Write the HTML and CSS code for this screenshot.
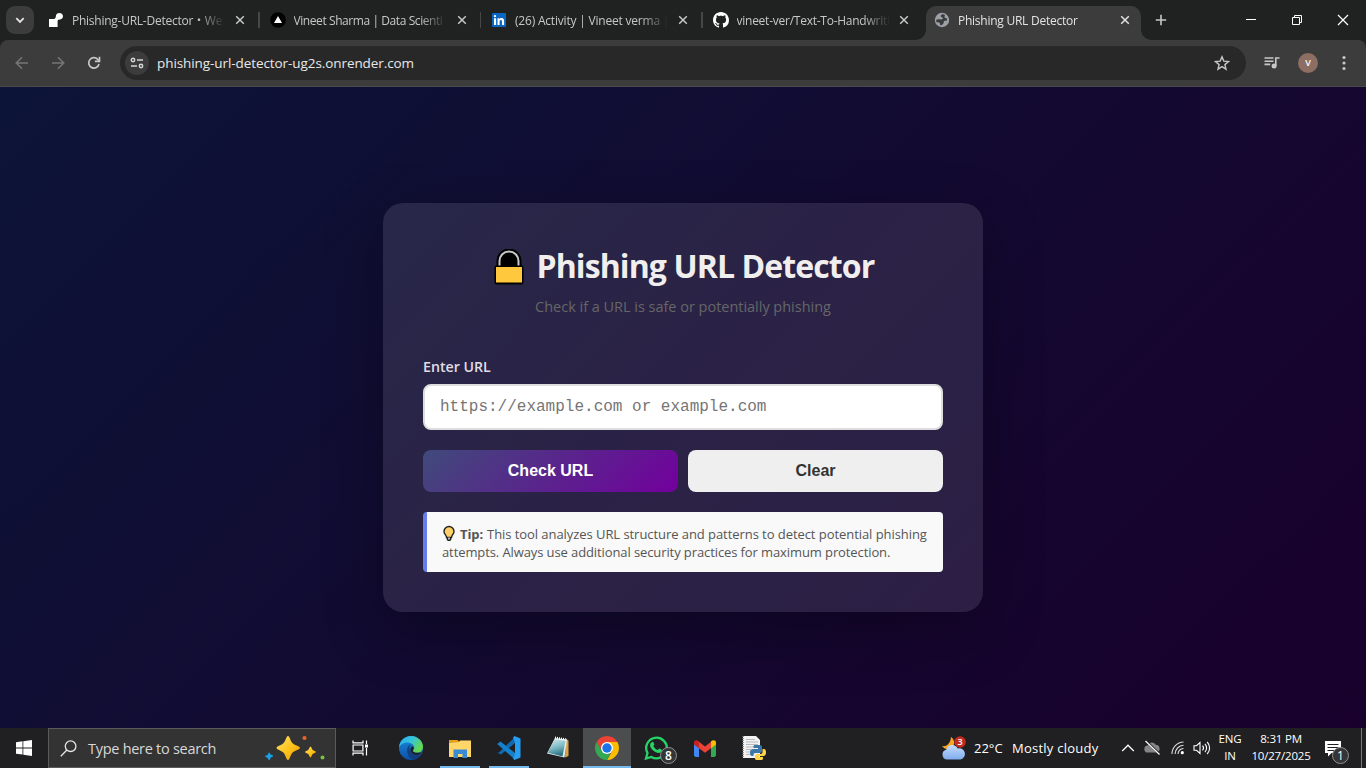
FILE: index.html
```html
<!DOCTYPE html>
<html lang="en">
<head>
<meta charset="utf-8">
<title>Phishing URL Detector</title>
<link rel="stylesheet" href="styles.css">
</head>
<body>
<div class="screen">
  <header class="tabstrip">
    <div class="tab-search"><svg width="10" height="10" viewBox="0 0 10 10" fill="none" stroke="#e3e3e3" stroke-width="1.8"><path d="M1.3 3.2 5 6.9l3.7-3.7"/></svg></div>
    <div class="tabs">
      <div class="tab sep">
        <svg class="fav" width="16" height="16" viewBox="0 0 16 16" fill="#fff"><path d="M1 7h4.500c1.800 0 2.200-1.300 2.400-3C8.100 2 9.300 1 11.500 1 13.600 1 15 2.500 15 4.200S13.600 7.500 11.600 7.500c-1.700 0-2 .8-2 2V15H1z"/></svg>
        <span class="title t1">Phishing-URL-Detector・We</span>
        <svg class="x" width="10" height="10" viewBox="0 0 10 10" stroke="#c7c7c7" stroke-width="1.5"><path d="m1.200 1.200 7.600 7.600M8.800 1.200 1.200 8.800"/></svg>
      </div>
      <div class="tab sep">
        <svg class="fav" width="16" height="16" viewBox="0 0 16 16"><circle cx="8" cy="8" r="7.800"/><path fill="#fff" d="m8 4 4 7H4z"/></svg>
        <span class="title t2">Vineet Sharma | Data Scienti</span>
        <svg class="x" width="10" height="10" viewBox="0 0 10 10" stroke="#c7c7c7" stroke-width="1.5"><path d="m1.200 1.200 7.600 7.600M8.800 1.200 1.200 8.800"/></svg>
      </div>
      <div class="tab sep">
        <svg class="fav" width="16" height="16" viewBox="0 0 16 16"><rect x="1" y="1" width="14" height="14" rx="1" fill="#0a66c2"/><path fill="#fff" d="M3 6.300h2.100V13H3zM6.500 6.300h2v1c.4-.7 1.100-1.200 2.100-1.200 2 0 2.500 1.300 2.500 3.200V13H11V9.700c0-1-.1-1.800-1.100-1.800S8.600 8.700 8.600 9.600V13H6.500z"/><circle cx="4" cy="4.100" r="1.200" fill="#fff"/></svg>
        <span class="title t3">(26) Activity | Vineet verma |</span>
        <svg class="x" width="10" height="10" viewBox="0 0 10 10" stroke="#c7c7c7" stroke-width="1.5"><path d="m1.200 1.200 7.600 7.600M8.800 1.200 1.200 8.800"/></svg>
      </div>
      <div class="tab">
        <svg class="fav" width="16" height="16" viewBox="0 0 16 16" fill="#fff"><path d="M8 0C3.580 0 0 3.580 0 8c0 3.540 2.290 6.530 5.470 7.590.4.070.55-.17.55-.38 0-.19-.01-.82-.01-1.490-2.010.37-2.530-.49-2.690-.94-.09-.23-.48-.94-.82-1.130-.28-.15-.68-.52-.01-.53.63-.01 1.080.58 1.230.82.72 1.210 1.870.87 2.330.66.07-.52.28-.87.51-1.070-1.780-.2-3.640-.89-3.640-3.950 0-.87.31-1.590.82-2.150-.08-.2-.36-1.020.08-2.120 0 0 .67-.21 2.200.82.64-.18 1.320-.27 2-.27s1.360.09 2 .27c1.530-1.040 2.200-.82 2.200-.82.44 1.100.16 1.920.08 2.120.51.56.82 1.270.82 2.150 0 3.070-1.870 3.750-3.650 3.950.29.25.54.73.54 1.480 0 1.070-.01 1.930-.01 2.200 0 .21.15.46.55.38A8.010 8.010 0 0 0 16 8c0-4.420-3.580-8-8-8"/></svg>
        <span class="title t4">vineet-ver/Text-To-Handwriti</span>
        <svg class="x" width="10" height="10" viewBox="0 0 10 10" stroke="#c7c7c7" stroke-width="1.5"><path d="m1.200 1.200 7.600 7.600M8.800 1.200 1.200 8.800"/></svg>
      </div>
      <div class="tab active">
        <svg class="fav" width="16" height="16" viewBox="0 0 16 16"><circle cx="8" cy="8" r="7.200" fill="#9aa0a6"/><path fill="#3c3c3c" d="M8.500 2.200C6.800 2.500 6.600 4 7 4.700c.5.800 1.500.4 1.800 1.200.3 1-.6 1.400-1.400 1.500-1 .1-2-.3-3-.2-1 0-1.800.2-2.300.8 0 .9.200 1.600.5 2.300.9.200 2-.1 2.800.4.900.6.300 1.600 1 2.300.6.500 1.600.4 2-.4.300-.8.900-1 1.300-1.700.3-.7-.200-1.300.4-1.900.8-.6 1.900-.1 2.700-.6.300-.6.300-1.300.1-2-.7-.5-2-.2-2.300-1.200-.3-1 .5-1.400.2-2.200-.400-.6-1.300-.9-2.300-.8"/></svg>
        <span class="title t5">Phishing URL Detector</span>
        <svg class="x" width="10" height="10" viewBox="0 0 10 10" stroke="#e3e3e3" stroke-width="1.500"><path d="m1.200 1.200 7.600 7.600M8.800 1.200 1.200 8.800"/></svg>
      </div>
    </div>
    <svg class="newtab" width="12" height="12" viewBox="0 0 12 12" stroke="#c7c7c7" stroke-width="1.600"><path d="M6 .8v10.400M.8 6h10.400"/></svg>
    <div class="win-controls">
      <svg width="46" height="40" viewBox="0 0 46 40" stroke="#fff"><path d="M18 19.500h10"/></svg>
      <svg width="46" height="40" viewBox="0 0 46 40" stroke="#fff" fill="none"><path d="M18.500 17.500h7v7h-7zM20.500 17v-1.500h7v7H26"/></svg>
      <svg width="46" height="40" viewBox="0 0 46 40" stroke="#fff" stroke-width="1.200"><path d="m18 15 10 10M28 15 18 25"/></svg>
    </div>
  </header>

  <nav class="toolbar">
    <svg class="nav-btn" width="36" height="36" viewBox="0 0 36 36" fill="none" stroke="#757575" stroke-width="1.600"><path d="M24 18H12.500m5.500-5.700L12.300 18l5.700 5.700"/></svg>
    <svg class="nav-btn" width="36" height="36" viewBox="0 0 36 36" fill="none" stroke="#757575" stroke-width="1.600"><path d="M12 18h11.500M18 12.300l5.700 5.700-5.700 5.700"/></svg>
    <svg class="nav-btn" width="36" height="36" viewBox="0 0 36 36" fill="none" stroke="#c7c7c7" stroke-width="1.700"><path d="M23 19a5.200 5.200 0 1 1-1.300-4.700L23.500 16"/><path d="M23.500 11.800v4.600h-4.600"/></svg>
    <div class="omnibox">
      <div class="chip"><svg width="16" height="16" viewBox="0 0 16 16" fill="none" stroke="#d5d5d5" stroke-width="1.500"><circle cx="4" cy="5" r="1.700"/><path d="M8 5h6M2 11h6"/><circle cx="12" cy="11" r="1.700"/></svg></div>
      <span class="address">phishing-url-detector-ug2s.onrender.com</span>
      <svg class="star" width="16" height="16" viewBox="0 0 16 16" fill="none" stroke="#c7c7c7" stroke-width="1.400"><path d="m8 1.800 1.800 4.300 4.700.4-3.600 3.100 1.100 4.600L8 11.700l-4 2.500 1.100-4.600-3.600-3.100 4.700-.4z"/></svg>
    </div>
    <svg class="media" width="16" height="14" viewBox="0 0 16 14" fill="none" stroke="#c7c7c7" stroke-width="1.600"><path d="M.5 2h9M.5 5.200h9M.5 8.400h5.700M11.800 10V2h3.700"/><circle cx="10.100" cy="10" r="1.700" fill="#c7c7c7"/></svg>
    <div class="avatar">V</div>
    <svg class="dots" width="4" height="16" viewBox="0 0 4 16" fill="#c7c7c7"><circle cx="2" cy="2.500" r="1.600"/><circle cx="2" cy="8" r="1.600"/><circle cx="2" cy="13.500" r="1.600"/></svg>
  </nav>

  <main class="page">
    <section class="card">
      <div class="heading">
        <svg class="lock" width="30" height="37" viewBox="0 0 30 37"><path d="M4.500 17v-5a10 10 0 0 1 21 0v5z" fill="#000" stroke="#000" stroke-width="4"/><path d="M5.500 18v-6a9.500 9.500 0 0 1 19 0v6" fill="#000" stroke="#c8c8c8" stroke-width="2"/><rect x=".5" y="16.500" width="29" height="19" rx="2" fill="#000"/><rect x="2" y="18" width="26" height="15.500" fill="#ffc83d"/></svg>
        <h1>Phishing URL Detector</h1>
      </div>
      <p class="subtitle"><span>Check if a URL is safe or potentially phishing</span></p>
      <label class="label">Enter URL</label>
      <input class="url" type="text" placeholder="https://example.com or example.com">
      <div class="buttons">
        <button class="btn check">Check URL</button>
        <button class="btn clear">Clear</button>
      </div>
      <div class="tip">
        <div class="line first"><svg width="14" height="17" viewBox="0 0 14 17"><path d="M7 1.500a5 5 0 0 0-5 5c0 2.600 2.500 3.700 2.500 6h5c0-2.300 2.500-3.400 2.500-6a5 5 0 0 0-5-5z" fill="#ffd067" stroke="#222" stroke-width="1.400"/><path d="M4.700 12h4.600v2.500L8.300 16H5.700l-1-1.500z" fill="#222"/><path d="M6 12.500h2v2H6z" fill="#bbb"/></svg><b>Tip:</b><span>This tool analyzes URL structure and patterns to detect potential phishing</span></div>
        <div class="line second">attempts. Always use additional security practices for maximum protection.</div>
      </div>
    </section>
  </main>

  <footer class="taskbar">
    <div class="start"><svg width="16" height="16" viewBox="0 0 16 16" fill="#fff"><path d="M0 2.200 6.500 1.300v6.200H0zM7.300 1.200 16 0v7.500H7.300zM0 8.400h6.500v6.200L0 13.700zM7.300 8.400H16V16l-8.700-1.200z"/></svg></div>
    <div class="search">
      <svg width="17" height="17" viewBox="0 0 17 17" fill="none" stroke="#e6e6e6" stroke-width="1.300"><circle cx="10.600" cy="6.200" r="5.300"/><path d="M6.900 10 .8 16.200"/></svg>
      <span>Type here to search</span>
      <svg class="sparkle" width="62" height="26" viewBox="0 0 62 26"><defs><linearGradient id="gold" x2="1" y2="1"><stop offset="0" stop-color="#ffe06a"/><stop offset=".55" stop-color="#fcc21b"/><stop offset="1" stop-color="#e59600"/></linearGradient></defs><path fill="url(#gold)" d="M24 1c1.800 0 2.200 5 4.600 7.200S36 11.300 36 12.900s-5 2.300-7.400 4.600S25.800 25 24 25s-2.200-5.200-4.600-7.500-6.900-3-6.900-4.600 4.500-2.500 6.900-4.700S22.200 1 24 1"/><path fill="url(#gold)" d="M46.500 11.500c.9 0 1.200 2.400 2.200 3.400s3.300 1.200 3.300 2-2.300 1.200-3.300 2.200-1.300 3.400-2.200 3.400-1.300-2.400-2.300-3.400-3.200-1.400-3.200-2.200 2.200-1 3.200-2 1.400-3.400 2.300-3.400"/><path fill="#1ba1e8" d="M5 17.500c.8.100 1 1.600 1.700 2.100s2.500.600 2.400 1.300-1.700 1-2.300 1.700-.8 2.800-1.600 2.700-1-1.800-1.600-2.400-2.500-.7-2.400-1.500 1.800-1 2.500-1.600.600-2.400 1.300-2.300"/><circle cx="40.500" cy="3" r="2.100" fill="#e8642c"/><circle cx="58.500" cy="22.500" r="2" fill="#7bc142"/></svg>
    </div>
    <div class="task"><svg width="17" height="16" viewBox="0 0 17 16" fill="none" stroke="#fff" stroke-width="1.200"><path d="M1 .5v2.400h10V.5M1 15.500v-2.400h10v2.400M1.100 5h9.800v6H1.100zM14.500.5V4M14.500 8v7.500"/><path d="M13 4.500h3v3h-3z" fill="#fff" stroke="none"/></svg></div>
    <div class="apps">
      <div class="app"><svg width="24" height="24" viewBox="0 0 24 24"><defs><linearGradient id="eg" x2="1" y2=".5"><stop stop-color="#2aa9e8"/><stop offset=".5" stop-color="#34c4e0"/><stop offset="1" stop-color="#66d84b"/></linearGradient><linearGradient id="eb" x2="0" y2="1"><stop stop-color="#1b8de0"/><stop offset="1" stop-color="#0c4fa4"/></linearGradient></defs><circle cx="12" cy="12" r="12" fill="url(#eb)"/><path fill="url(#eg)" d="M0 11.500C.5 5 5.600 0 12 0s12 5 12 10.800c0 3.900-2.700 6-6 6-3.200 0-4.500-1.400-4-2.300.8-1 1.200-1.700 1.200-2.800C15.200 8.500 12 6.400 8.500 6.400 4.600 6.400 1.300 8.500 0 11.500"/><path fill="#113f80" d="M8.300 12.800c.300-2.300 2-4 4-4.200-2.300 1.500-2.500 4.200-1 6.600 2.100 3.500 6.700 4.500 11 2.700C20.500 21.300 17 23.500 13.500 23.500c-3.500-1-5.800-6-5.200-10.700"/><path fill="#202022" d="M12.200 11c1.600-1.600 3.500.4 1.900 2.900-1.200 2 2.900 3.900 8.300 2.300-.2 1.600-3 3-5.500 2.600-4.700-.7-6.700-4.700-4.700-7.800"/></svg></div>
      <div class="app on"><svg width="22" height="19" viewBox="0 0 22 19"><path fill="#e8a013" d="M0 1h8.500L11 3.500H0z"/><path fill="#ffd667" d="M0 3.500 10 3 11 1.500h11V18H0z"/><path fill="#398bd4" d="M4.500 10.500h13.500v8.500h-4.500V15H9v4H4.500z"/></svg></div>
      <div class="app on"><svg width="24" height="24" viewBox="0 0 24 24"><path fill="#0f6ab4" d="M2 16.500 18 1v6L4 18.500l-3.800-2z"/><path fill="#1581cb" d="M.2 8 3.500 5.500 18 17v6.500z"/><path fill="#259df0" d="m17.500 0 6 2.500v19L17.500 24 16 22.500 18 18V6.500L16 1.500z"/></svg></div>
      <div class="app"><svg width="24" height="24" viewBox="0 0 24 24"><defs><linearGradient id="np" x2=".3" y2="1"><stop stop-color="#d4eaec"/><stop offset=".55" stop-color="#7dbac4"/><stop offset="1" stop-color="#2f7483"/></linearGradient></defs><path fill="#d9a34a" d="m20 3 2.500 1.500V20l-3.500 1.500z"/><path fill="#e6eded" d="m9 2 12 1.500-2.500 18L1 17.500z"/><path fill="url(#np)" d="m8.500 3.500 11 1.200-3 15.800-14.500-3.800z"/><path d="m9 1.500 12 2" stroke="#fff" stroke-width="2" stroke-dasharray="1 1"/></svg></div>
      <div class="app on current"><svg width="24" height="24" viewBox="0 0 24 24"><path fill="#ea4335" d="M1.610 6A12 12 0 0 1 22.390 6H12v6L6.800 15z"/><path fill="#fbbc04" d="M22.390 6A12 12 0 0 1 12 24l5.200-9L12 6z"/><path fill="#34a853" d="M12 24A12 12 0 0 1 1.610 6l5.190 9 5.200 3 3.460-1z"/><circle cx="12" cy="12" r="6" fill="#fff"/><circle cx="12" cy="12" r="4.700" fill="#1a73e8"/></svg></div>
      <div class="app"><svg width="24" height="24" viewBox="0 0 24 24"><path fill="none" stroke="#25d366" stroke-width="2.300" d="M2 22.500 3.500 17A10.300 10.300 0 1 1 7.300 20.900z"/><path fill="#25d366" d="M8 6c.8-.4 1.300-.1 1.600.6l.7 1.700c.2.600-.7 1.300-.9 1.700.8 1.900 2.400 3.300 4.400 4.100.6-.5 1.200-1.600 1.700-1.500l2.100 1c.4.300.2 2-.7 2.700-1.500 1.200-3.500.7-5.500-.2-2.600-1.300-5-4.300-5.300-6.100C5.900 8.300 6.600 6.700 8 6"/></svg><span class="count">8</span></div>
      <div class="app"><svg width="22" height="17" viewBox="0 0 22 17"><path fill="#4285f4" d="M0 4h5v13H1.500L0 15.500z"/><path fill="#34a853" d="M17 4h5v11.500L20.500 17H17z"/><path fill="#ea4335" d="m0 2.500 4-1.500 7 5.500L18 1v6.500l-7 5.300-6-4.500z"/><path fill="#c5221f" d="M0 2.500C0 .5 2.500-.6 5 1.300v7L0 4.500z"/><path fill="#fbbc04" d="M22 2.500C22 .5 19.500-.6 17 1.300v7l5-3.800z"/></svg></div>
      <div class="app"><svg width="24" height="24" viewBox="0 0 24 24"><path fill="#f2f2f2" d="M1 0h13l4 4v18H1z"/><path stroke="#aaa" stroke-width=".8" d="M4 3.500h9M4 6h12M4 8.500h12M4 11h8M4 13.500h5M4 16h5M4 18.500h7"/><path stroke="#777" stroke-width="1.500" stroke-dasharray="1 1" d="M1 0v22"/><path fill="#3b77a8" d="M13 9h4.500c2 0 2.500 1 2.500 2.500V15c0 1.500-1 2-2.500 2h-4c-1.500 0-2 .8-2 2v1H10c-1.500 0-2-1.500-2-3.500S9 13 11 13h5v-1h-4.500v-1.500c0-1 .5-1.500 1.500-1.500"/><path fill="#ffd54a" d="M20.500 13H22c1.300 0 2 1.500 2 3.500s-1 3.500-2.500 3.500H17v1h4v1.500c0 1-1 1.500-2.500 1.500h-3c-1.500 0-2.500-.5-2.500-1.500V20c0-1.300.7-2 2-2h3.500c1.300 0 2-1 2-2z"/></svg></div>
    </div>
    <div class="tray">
      <svg class="weather" width="26" height="24" viewBox="0 0 26 24"><defs><linearGradient id="cl" x2="0" y2="1"><stop stop-color="#c4ddfb"/><stop offset="1" stop-color="#80acee"/></linearGradient></defs><path fill="#f6a623" d="M10 1c4 2.500 4.500 9-.5 12-3 1-7-.5-8.500-3 5 1 8.500-3 9-9"/><path fill="url(#cl)" d="M6 23.500a5 5 0 0 1-.8-9.800C6 9.800 9 8.500 12 9c2 .2 4 1.700 4.800 3.500a5.500 5.500 0 0 1 2.900 11z"/><circle cx="19" cy="6" r="5.800" fill="#c42b1c"/><text x="19" y="9.200" class="badge-num">3</text></svg>
      <span class="temp">22°C</span><span class="cond">Mostly cloudy</span>
      <svg class="chev" width="14" height="8" viewBox="0 0 14 8" fill="none" stroke="#fff" stroke-width="1.300"><path d="m1.200 7 5.800-5.800L12.800 7"/></svg>
      <svg class="cloud" width="17" height="16" viewBox="0 0 17 16"><path fill="#858585" d="M4 12.500a3.500 3.500 0 0 1-.3-7C5 2 9.500 1 11.600 4.800a4 4 0 0 1 1.500 7.700z"/><path stroke="#202022" stroke-width="2.400" d="M2.500 1.500 15.500 14"/><path stroke="#fff" stroke-width="1.200" d="m1.500 1 14 13.500"/></svg>
      <svg class="wifi" width="14" height="14" viewBox="0 0 14 14" fill="none" stroke="#ddd"><path stroke-width="1.100" d="M1 13A12 12 0 0 1 12.500 1M4 13A9 9 0 0 1 12.500 4.300M7 13a6 6 0 0 1 5.500-5.500"/><circle cx="11.300" cy="11.700" r="1.600" fill="#fff" stroke="none"/></svg>
      <svg class="vol" width="18" height="14" viewBox="0 0 18 14" fill="none" stroke="#fff" stroke-width="1.100"><path d="M1 4.700h2.500L7 1.500v11L3.500 9.300H1zM9.500 4.700c1.200 1.300 1.200 3.300 0 4.600M11.900 2.900c2.200 2.200 2.200 6 0 8.200M14.200 1c3.200 3.400 3.200 8.600 0 12"/></svg>
      <div class="lang"><span>ENG</span><span>IN</span></div>
      <div class="clock"><span class="time">8:31 PM</span><span class="date">10/27/2025</span></div>
      <div class="notif"><svg width="16" height="17" viewBox="0 0 16 17"><path fill="#fff" d="M0 1h16v12H6.500L3 16.500V13H0z"/><path stroke="#202022" stroke-width="1.200" d="M2.500 4.500h11M2.500 7.500h11M2.500 10.500h7"/></svg><span class="count">1</span></div>
      <div class="peek"></div>
    </div>
  </footer>
</div>
</body>
</html>
```

FILE: styles.css
```css
* { box-sizing: border-box; }
body { margin: 0; font-family: "Open Sans", "Noto Sans", "Noto Sans CJK JP", sans-serif; overflow: hidden; }
svg { display: block; flex: none; }
.screen { width: 1366px; height: 768px; display: flex; flex-direction: column; background: #202221; }

.tabstrip { height: 40px; display: flex; align-items: center; padding-left: 6px; color: #c7c7c7; font-size: 12px; }
.tab-search { width: 28px; height: 28px; border-radius: 9px; background: #3c3c3c; display: flex; align-items: center; justify-content: center; margin-right: 6px; }
.tabs { display: flex; align-self: stretch; }
.tab { position: relative; width: 221.5px; display: flex; align-items: center; padding-left: 8px; }
.tab.sep::after { content: ""; position: absolute; right: 2px; top: 12px; width: 1.5px; height: 16px; background: #474747; }
.title { width: 152px; margin-left: 8px; padding-top: 2px; white-space: nowrap; line-height: 20px; letter-spacing: -0.25px; -webkit-mask-image: linear-gradient(90deg, #000 126px, transparent 153px); mask-image: linear-gradient(90deg, #000 126px, transparent 153px); }
.t2 { letter-spacing: -0.42px; }
.t3 { letter-spacing: -0.2px; }
.x { margin-left: 11px; }
.t4 + .x { margin-left: 10px; }
.tab.active { width: 215px; height: 34px; margin-top: 6px; padding-bottom: 6px; background: #3c3c3c; border-radius: 10px 10px 0 0; color: #e3e3e3; }
.tab.active .x { margin-left: 10px; }
.tab.active::before, .tab.active::after { content: ""; position: absolute; bottom: 0; width: 10px; height: 10px; }
.tab.active::before { left: -10px; background: radial-gradient(circle at 0 0, transparent 9.500px, #3c3c3c 10px); }
.tab.active::after { right: -10px; background: radial-gradient(circle at 100% 0, transparent 9.500px, #3c3c3c 10px); }
.newtab { margin-left: 14px; }
.win-controls { display: flex; margin-left: auto; }

.toolbar { height: 47px; display: flex; align-items: center; padding: 0 20px 1px 4px; background: #3c3c3c; border-bottom: 1px solid #4a4a4a; border-radius: 8px 8px 0 0; }
.omnibox { width: 1126px; height: 34px; margin-left: 8px; border-radius: 17px; background: #282828; display: flex; align-items: center; padding: 0 16px 0 5px; }
.chip { width: 24px; height: 24px; border-radius: 50%; background: #3c3c3c; display: flex; align-items: center; justify-content: center; }
.address { margin-left: 8px; color: #e8e8e8; font-size: 13.500px; letter-spacing: -0.08px; }
.star { margin-left: auto; }
.media { margin-left: 18px; }
.avatar { width: 20px; height: 20px; margin-left: 18px; border-radius: 50%; background: #8d6e63; color: #fff; font-size: 9px; font-weight: 600; line-height: 20px; text-align: center; }
.dots { margin-left: 24px; }

.page { flex: 1; display: flex; align-items: center; justify-content: center; background: linear-gradient(135deg, #0c1437, #19002c); }
.card { width: 600px; height: 409px; padding: 40px; border-radius: 20px; background: rgba(255, 255, 255, 0.1); box-shadow: 0 20px 60px rgba(0, 0, 0, 0.3); }
.heading { display: flex; align-items: center; justify-content: center; gap: 13px; height: 48px; padding-left: 3px; }
.lock { margin-top: 1px; }
h1 { margin: -2px 0 0; width: 339px; color: #f1eeee; font-size: 32px; line-height: 48px; letter-spacing: -0.9px; white-space: nowrap; }
.subtitle { margin: 6px 0 0; text-align: center; color: #666; font-size: 14.500px; line-height: 20px; letter-spacing: -0.02px; }
.label { display: block; margin-top: 40px; color: #e0dde4; font-size: 14.200px; font-weight: 600; line-height: 20px; letter-spacing: 0; }
.url { display: block; width: 520px; height: 46px; margin-top: 7px; padding: 0 15px; border: 2px solid #ddd; border-radius: 8px; background: #fff; font: 16px "Liberation Mono", monospace; }
.url::placeholder { color: #757575; }
.buttons { display: flex; gap: 10px; margin-top: 20px; }
.btn { flex: 1; height: 42px; padding: 0; border: 0; border-radius: 8px; font: bold 16px "Liberation Sans", sans-serif; }
.check { color: #fff; background: linear-gradient(135deg, #404a7b, #72009d); }
.clear { color: #333; background: #efefef; }
.tip { height: 60px; margin-top: 20px; padding: 13px 0 0 15px; border-left: 4px solid #667eea; border-radius: 4px; background: #f9f9f9; color: #555; font-size: 13px; line-height: 18px; white-space: nowrap; }
.line { display: flex; height: 18px; }
.first { letter-spacing: -0.06px; }
.first b { margin: 0 4px; letter-spacing: -0.1px; }
.second { letter-spacing: -0.1px; }

.taskbar { height: 40px; display: flex; background: #202022; color: #fff; }
.start, .task { width: 48px; display: flex; align-items: center; justify-content: center; }
.search { width: 288px; border: 1px solid #5b5b5b; background: #333; display: flex; align-items: center; padding: 0 9px 0 11px; color: #d8d8d8; font-size: 14.500px; letter-spacing: -0.28px; }
.search span { margin-left: 11px; }
.sparkle { margin-left: auto; }
.apps { display: flex; gap: 1px; padding-left: 3px; }
.app { position: relative; width: 48px; display: flex; align-items: center; justify-content: center; }
.app.on::after { content: ""; position: absolute; left: 4px; right: 4px; bottom: 0; height: 2px; background: #76b9ed; }
.app.current { background: #4c4d4f; }
.app.current::after { left: 0; right: 0; }
.count { position: absolute; width: 17px; height: 17px; border: 1px solid #929292; border-radius: 50%; background: #353537; color: #fff; font-size: 12px; line-height: 15px; text-align: center; }
.app .count { left: 28px; top: 19px; font-weight: 600; }
.tray { margin-left: auto; display: flex; align-items: center; font-size: 13px; white-space: nowrap; }
.badge-num { fill: #fff; font-size: 9px; font-weight: 600; text-anchor: middle; }
.temp { width: 30px; margin-left: 7px; }
.cond { width: 88px; margin-left: 8px; letter-spacing: 0.25px; }
.chev { margin-left: 21px; }
.cloud { margin-left: 9px; }
.wifi { margin-left: 10px; }
.vol { margin-left: 8px; }
.lang, .clock { display: flex; flex-direction: column; align-items: center; margin-top: -2px; font-size: 11.500px; line-height: 17px; letter-spacing: -0.2px; }
.lang { width: 30px; margin-left: 4px; }
.clock { width: 66px; margin-left: 3px; }
.notif { position: relative; margin-left: 11px; }
.notif .count { left: 7px; top: 7px; }
.peek { width: 1px; height: 40px; margin: 0 4px 0 20px; background: #77777a; }
```
